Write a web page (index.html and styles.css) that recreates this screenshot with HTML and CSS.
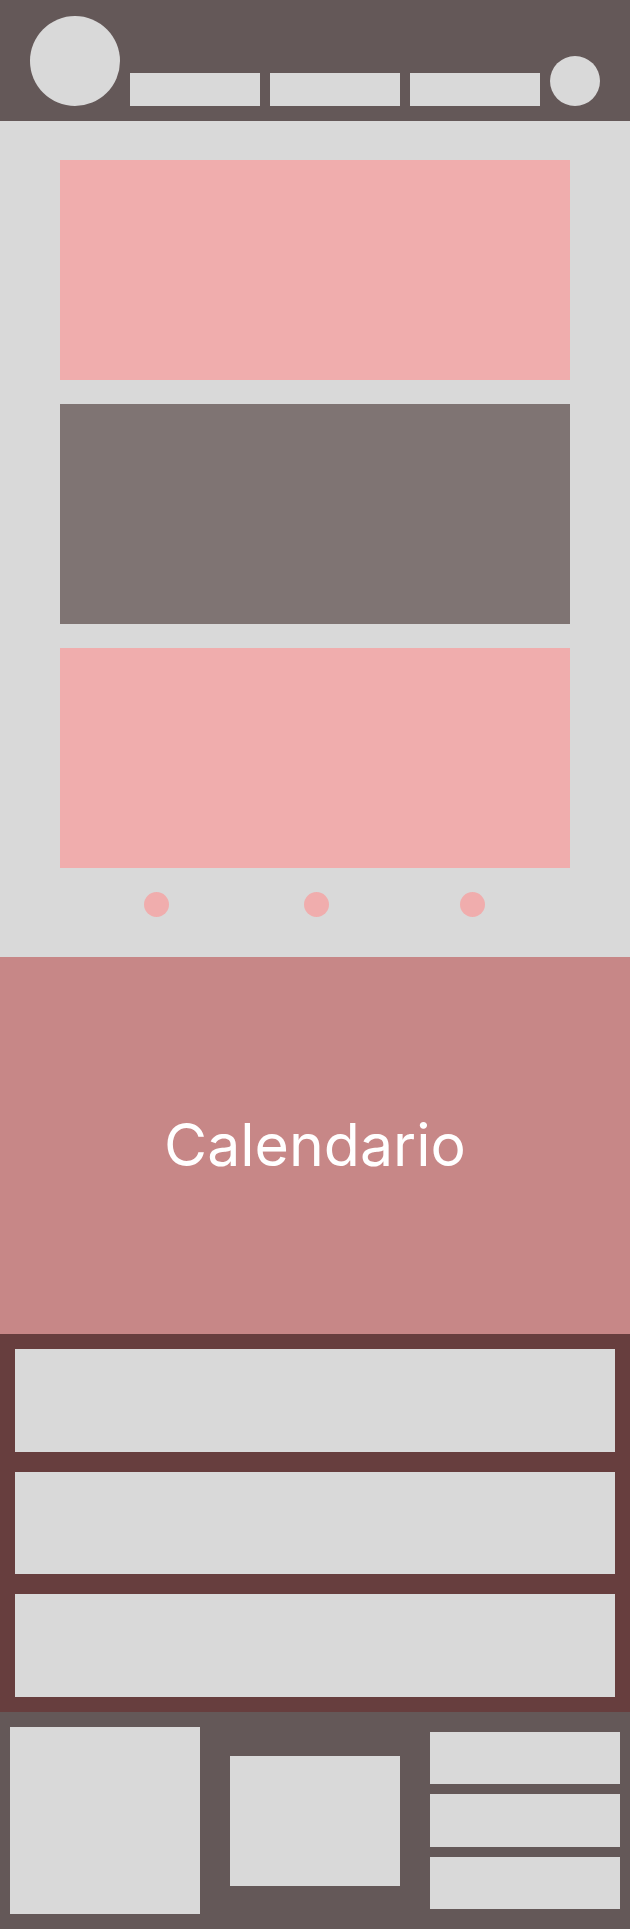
FILE: index.html
```html
<!DOCTYPE html>
<html lang="es">
<head>
<meta charset="utf-8">
<title>Calendario</title>
<link rel="stylesheet" href="styles.css">
</head>
<body>
  <header class="site-header">
    <div class="logo"></div>
    <nav class="nav">
      <a class="nav-item" href="#"></a>
      <a class="nav-item" href="#"></a>
      <a class="nav-item" href="#"></a>
    </nav>
    <div class="avatar"></div>
  </header>

  <main class="carousel">
    <div class="slides">
      <div class="slide slide-pink"></div>
      <div class="slide slide-gray"></div>
      <div class="slide slide-pink"></div>
    </div>
    <div class="dots">
      <span class="dot dot-1"></span>
      <span class="dot dot-2"></span>
      <span class="dot dot-3"></span>
    </div>
  </main>

  <section class="calendar">
    <h2 class="calendar-title">Calendario</h2>
  </section>

  <section class="list">
    <div class="list-card"></div>
    <div class="list-card"></div>
    <div class="list-card"></div>
  </section>

  <footer class="site-footer">
    <div class="foot-big"></div>
    <div class="foot-mid"></div>
    <div class="foot-stack">
      <div class="foot-item"></div>
      <div class="foot-item"></div>
      <div class="foot-item"></div>
    </div>
  </footer>
</body>
</html>
```

FILE: styles.css
```css
* {
  box-sizing: border-box;
}

html, body {
  margin: 0;
  padding: 0;
}

body {
  width: 630px;
  background: #d9d9d9;
  font-family: Inter, "Noto Sans", sans-serif;
}

/* Header */
.site-header {
  height: 121px;
  background: #645858;
  display: flex;
  align-items: flex-end;
  padding: 16px 30px 15px 30px;
  gap: 10px;
}

.logo {
  width: 90px;
  height: 90px;
  border-radius: 50%;
  background: #d9d9d9;
  flex: none;
}

.nav {
  display: flex;
  gap: 10px;
}

.nav-item {
  display: block;
  width: 130px;
  height: 33px;
  background: #d9d9d9;
}

.avatar {
  width: 50px;
  height: 50px;
  border-radius: 50%;
  background: #d9d9d9;
  flex: none;
}

/* Carousel */
.carousel {
  background: #d9d9d9;
  padding: 39px 60px 40px 60px;
}

.slides {
  display: flex;
  flex-direction: column;
  gap: 24px;
}

.slide {
  height: 220px;
}

.slide-pink {
  background: #f0adad;
}

.slide-gray {
  background: #7f7473;
}

.dots {
  display: flex;
  margin-top: 24px;
  height: 25px;
}

.dot {
  width: 25px;
  height: 25px;
  border-radius: 50%;
  background: #f0adad;
}

.dot-1 {
  margin-left: 84px;
}

.dot-2 {
  margin-left: 135px;
}

.dot-3 {
  margin-left: 131px;
}

/* Calendar */
.calendar {
  height: 377px;
  background: #c78787;
  display: flex;
  align-items: center;
  justify-content: center;
}

.calendar-title {
  margin: 0;
  color: #ffffff;
  font-family: Inter, "Noto Sans", sans-serif;
  font-weight: 400;
  font-size: 59px;
  line-height: 1.2;
}

/* List */
.list {
  height: 378px;
  background: #673e3e;
  padding: 15px;
  display: flex;
  flex-direction: column;
  gap: 20px;
}

.list-card {
  flex: 1;
  background: #d9d9d9;
}

/* Footer */
.site-footer {
  height: 217px;
  background: #645858;
  padding: 15px 10px;
  display: flex;
  align-items: center;
  gap: 30px;
}

.foot-big {
  width: 190px;
  height: 187px;
  background: #d9d9d9;
  flex: none;
}

.foot-mid {
  width: 170px;
  height: 130px;
  background: #d9d9d9;
  flex: none;
}

.foot-stack {
  width: 190px;
  display: flex;
  flex-direction: column;
  gap: 10px;
  flex: none;
}

.foot-item {
  height: 52.3px;
  background: #d9d9d9;
}
```
